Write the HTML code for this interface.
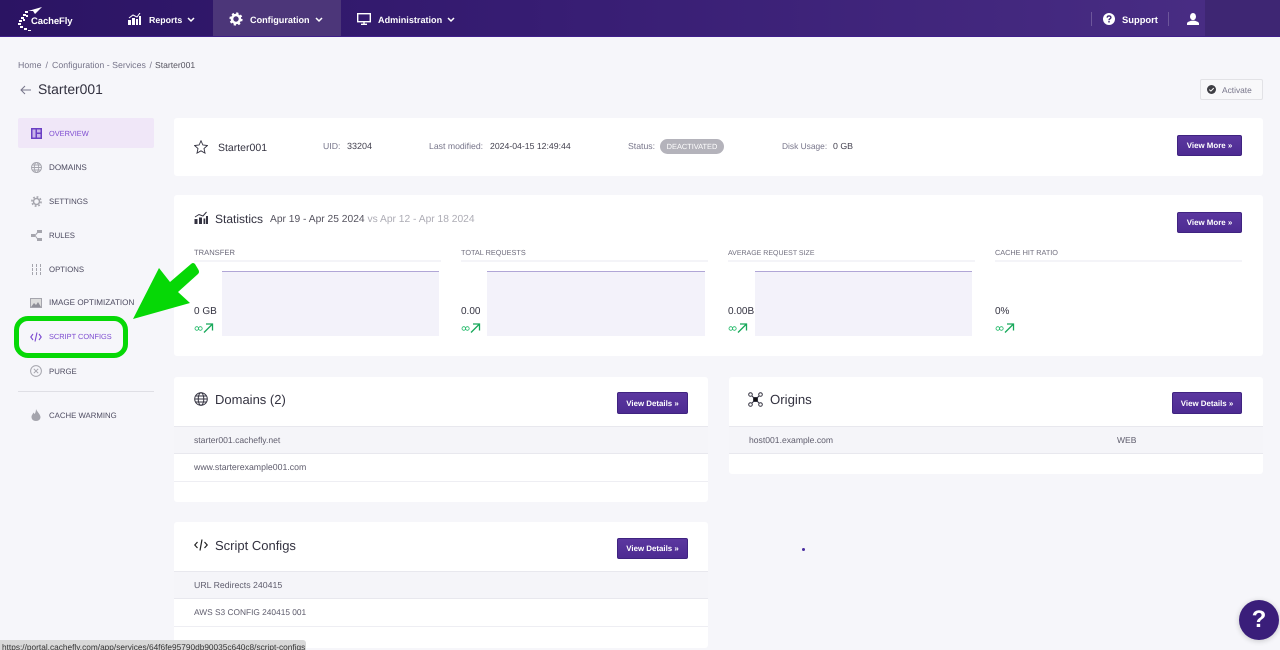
<!DOCTYPE html>
<html><head><meta charset="utf-8"><title>Starter001</title>
<style>
html,body{margin:0;padding:0;width:1280px;height:650px;overflow:hidden;background:#f6f6fa;font-family:"Liberation Sans",sans-serif;color:#4a4858;text-rendering:geometricPrecision}
.a{position:absolute}
.t{position:absolute;white-space:nowrap;line-height:14px}
.card{position:absolute;background:#fff;border-radius:3px}
.nav{position:absolute;left:0;top:0;width:1280px;height:36px;background:linear-gradient(90deg,#2b1463 0%,#361c72 40%,#4a2e85 100%);border-bottom:1px solid #3f1f8a}
.nt{position:absolute;top:13px;color:#fff;font-size:9.1px;font-weight:bold;line-height:14px;white-space:nowrap}
.side{position:absolute;left:49px;font-size:7.8px;line-height:12px;color:#4d4b60;white-space:nowrap}
.btn{position:absolute;height:22px;background:linear-gradient(#5b379f,#4d2b92);border:1px solid #3f2380;box-sizing:border-box;border-radius:2px;color:#fff;font-size:7.9px;font-weight:bold;line-height:21px;text-align:center;white-space:nowrap}
.h{position:absolute;font-size:13px;color:#333240;line-height:16px;white-space:nowrap}
.lab{position:absolute;top:247px;font-size:7.3px;color:#6d6b7b;line-height:12px;white-space:nowrap}
.ln{position:absolute;top:260px;height:1.5px;background:#f4f4f8}
.ch{position:absolute;top:271px;height:65px;background:#f3f2fa;border-top:1px solid #b0a6d6;box-sizing:border-box}
.val{position:absolute;top:305px;font-size:10px;color:#333240;line-height:14px}
.row{position:absolute;font-size:8.6px;color:#5f5d6d;line-height:26px;box-sizing:border-box;padding-left:20px;white-space:nowrap}
.g{background:#f5f5f9;border-top:1px solid #e8e8ee;border-bottom:1px solid #e8e8ee}
.b{border-bottom:1.5px solid #eeeef3}
</style></head><body>

<div class="nav"></div>
<div class="a" style="left:213px;top:0;width:128px;height:36px;background:#4c3679"></div>
<div class="a" style="left:1205px;top:0;width:75px;height:36px;background:#3e2673"></div>
<div class="a" style="left:1091px;top:12px;width:1px;height:14px;background:#6d569b"></div>
<div class="a" style="left:1168px;top:12px;width:1px;height:14px;background:#6d569b"></div>

<svg class="a" style="left:17px;top:5px" width="30" height="28" viewBox="0 0 30 28" fill="#fff"><path d="M11 6L25 2 18 9 16 6z"/><path d="M8 6h3v2H8zM6 9h3v2H6zM4 12h3v2H4zM2 15h3v2H2zM1 18h3v2H1zM3 21h3v2H3zM7 23h3v2H7zM11 25h3v1h-3zM9 10h2v2H9zM6 14h2v2H6z"/></svg>
<div class="t" style="left:31px;top:15px;color:#fff;font-size:9.5px;font-weight:bold;letter-spacing:-.1px">CacheFly</div>

<svg class="a" style="left:128px;top:13px" width="13" height="12" viewBox="0 0 13 12" fill="#fff"><path d="M0 7h3v5H0zM4 5h3v7H4zM8 6h2v6H8zM11 3h2v9h-2z"/><path d="M1 5L5 2 9 4 12 0" stroke="#fff" fill="none"/></svg>
<div class="nt" style="left:149px;font-size:8.8px">Reports</div>
<svg class="a" style="left:187px;top:17px" width="8" height="6" fill="none" stroke="#fff" stroke-width="1.5"><path d="M1 1l3 3 3-3"/></svg>
<svg class="a" style="left:229px;top:12px" width="14" height="14" viewBox="0 0 14 14"><circle cx="7" cy="7" r="4" fill="none" stroke="#fff" stroke-width="2.6"/><circle cx="7" cy="7" r="5.6" fill="none" stroke="#fff" stroke-width="2" stroke-dasharray="2.2 2.2"/></svg>
<div class="nt" style="left:250px">Configuration</div>
<svg class="a" style="left:315px;top:17px" width="8" height="6" fill="none" stroke="#fff" stroke-width="1.5"><path d="M1 1l3 3 3-3"/></svg>
<svg class="a" style="left:357px;top:13px" width="14" height="12" viewBox="0 0 14 12" fill="none" stroke="#fff"><rect x=".7" y=".7" width="12.6" height="8" stroke-width="1.4"/><path d="M4 11.3h6M7 9v2" stroke-width="1.4"/></svg>
<div class="nt" style="left:378px">Administration</div>
<svg class="a" style="left:447px;top:17px" width="8" height="6" fill="none" stroke="#fff" stroke-width="1.5"><path d="M1 1l3 3 3-3"/></svg>

<svg class="a" style="left:1103px;top:13px" width="12" height="12" viewBox="0 0 12 12"><circle cx="6" cy="6" r="6" fill="#fff"/><path d="M4.2 4.6C4.2 2.4 7.9 2.4 7.9 4.5 7.9 5.8 6 5.9 6 7.2" fill="none" stroke="#3d2575" stroke-width="1.4"/><rect x="5.3" y="8" width="1.4" height="1.5" fill="#3d2575"/></svg>
<div class="nt" style="left:1122px;font-size:9.4px">Support</div>
<svg class="a" style="left:1187px;top:13px" width="12" height="13" viewBox="0 0 12 13" fill="#fff"><ellipse cx="6" cy="3.6" rx="3" ry="3.6"/><path d="M0 12V10.500C0 9 2.500 8.500 4 7.800H8C9.500 8.500 12 9 12 10.500V12z"/></svg>

<div class="t" style="left:18px;top:58px;font-size:8.8px;color:#77758a">Home</div>
<div class="t" style="left:45.500px;top:58px;font-size:8.800px;color:#77758a">/</div>
<div class="t" style="left:52px;top:58px;font-size:8.800px;color:#77758a">Configuration - Services</div>
<div class="t" style="left:149.500px;top:58px;font-size:8.800px;color:#77758a">/</div>
<div class="t" style="left:155px;top:58px;font-size:8.600px;color:#55535f">Starter001</div>
<svg class="a" style="left:20px;top:85px" width="12" height="10" fill="none" stroke="#77758a"><path d="M11 5H1M5 1L1 5l4 4"/></svg>
<div class="t" style="left:38px;top:81px;font-size:13.900px;line-height:17px;color:#333240">Starter001</div>

<div class="a" style="left:1200px;top:79px;width:63px;height:21px;box-sizing:border-box;background:#f8f8fa;border:1px solid #e2e2e6;border-radius:2px"></div>
<svg class="a" style="left:1207px;top:85px" width="9" height="9" viewBox="0 0 9 9"><circle cx="4.500" cy="4.500" r="4.500" fill="#3f3f45"/><path d="M2.300 4.600l1.600 1.500 2.800-3" fill="none" stroke="#fff"/></svg>
<div class="t" style="left:1222px;top:83px;font-size:8.400px;color:#77758a">Activate</div>

<!-- sidebar -->
<div class="a" style="left:18px;top:118px;width:136px;height:30px;background:#f0e7f8;border-radius:2px"></div>
<svg class="a" style="left:31px;top:128px" width="11" height="11" viewBox="0 0 11 11"><rect width="11" height="11" fill="#6b3fc4"/><path d="M1.500 1.500h3v8h-3zM6 1.500h3.500v3H6zM6 6h3.500v3.500H6z" fill="#c9b4ea"/></svg>
<div class="side" style="top:128px;color:#7c4ad0;font-size:7.400px">OVERVIEW</div>
<svg class="a" style="left:31px;top:162px" width="11" height="11" viewBox="0 0 11 11" fill="none" stroke="#a5a5ad" stroke-width=".9"><circle cx="5.500" cy="5.500" r="5"/><ellipse cx="5.500" cy="5.500" rx="2.200" ry="5"/><path d="M.5 5.500h10M1.200 3h8.600M1.200 8h8.600"/></svg>
<div class="side" style="top:162px;font-size:8.100px">DOMAINS</div>
<svg class="a" style="left:31px;top:196px" width="11" height="11" viewBox="0 0 11 11" fill="none" stroke="#a5a5ad"><circle cx="5.500" cy="5.500" r="3" stroke-width="1.500"/><circle cx="5.500" cy="5.500" r="4.600" stroke-width="1.600" stroke-dasharray="1.800 1.800"/></svg>
<div class="side" style="top:196px">SETTINGS</div>
<svg class="a" style="left:31px;top:230px" width="11" height="11" viewBox="0 0 11 11" fill="#a5a5ad"><path d="M0 4h4v3H0zM6 0h5v3H6zM6 8h5v3H6z"/><path d="M4 5.500L7 2M4 5.500L7 9.500" stroke="#a5a5ad" fill="none"/></svg>
<div class="side" style="top:230px">RULES</div>
<svg class="a" style="left:31px;top:264px" width="11" height="11" viewBox="0 0 11 11" stroke="#a5a5ad" stroke-width="1"><path d="M1.500 0v11M5.500 0v11M9.500 0v11" stroke-dasharray="3 1"/></svg>
<div class="side" style="top:264px">OPTIONS</div>
<svg class="a" style="left:30px;top:298px" width="12" height="10" viewBox="0 0 12 10"><rect width="12" height="10" fill="#a5a5ad"/><rect x="1" y="1" width="10" height="8" fill="#ddd"/><path d="M1 9l3-4 2 2 2-3 3 5z" fill="#8f8f98"/></svg>
<div class="side" style="top:297px;font-size:8.100px">IMAGE OPTIMIZATION</div>
<svg class="a" style="left:30px;top:332px" width="12" height="10" viewBox="0 0 12 10" fill="none" stroke="#7c4ad0" stroke-width="1.100"><path d="M3 2L.8 5 3 8M9 2l2.200 3L9 8M7 .5L5 9.500"/></svg>
<div class="side" style="top:331px;color:#7c4ad0;font-size:7.400px">SCRIPT CONFIGS</div>
<svg class="a" style="left:30px;top:365px" width="12" height="12" viewBox="0 0 12 12" fill="none" stroke="#a5a5ad"><circle cx="6" cy="6" r="5.400"/><path d="M3.800 3.800l4.400 4.400M8.200 3.800l-4.400 4.400"/></svg>
<div class="side" style="top:366px">PURGE</div>
<div class="a" style="left:18px;top:391px;width:136px;height:1px;background:#dfdfe5"></div>
<svg class="a" style="left:31px;top:409px" width="10" height="12" viewBox="0 0 10 12" fill="#a5a5ad"><path d="M5 0C6 3 9 4.500 9.500 8 9.500 10.500 7.500 12 5 12 2.500 12 .5 10.500.5 8 .5 6 2 5 2.500 3.500L3.500 5C4.500 4 5 2 5 0z"/></svg>
<div class="side" style="top:410px">CACHE WARMING</div>

<!-- top card -->
<div class="card" style="left:174px;top:118px;width:1089px;height:58px"></div>
<svg class="a" style="left:194px;top:140px" width="14" height="14" viewBox="0 0 14 14" fill="none" stroke="#333240" stroke-width=".9"><path d="M7 .8l1.900 4.200 4.500.5-3.400 3 1 4.600L7 10.800 3 13.100l1-4.600-3.400-3 4.500-.5z"/></svg>
<div class="t" style="left:218px;top:141px;font-size:10.500px;color:#333240">Starter001</div>
<div class="t" style="left:323px;top:139px;font-size:8.700px;color:#77758a">UID:</div>
<div class="t" style="left:347px;top:139px;font-size:9px;color:#444250">33204</div>
<div class="t" style="left:429px;top:139px;font-size:8.700px;color:#77758a">Last modified:</div>
<div class="t" style="left:490px;top:139px;font-size:8.700px;color:#444250">2024-04-15 12:49:44</div>
<div class="t" style="left:628px;top:139px;font-size:8.700px;color:#77758a">Status:</div>
<div class="a" style="left:660px;top:139px;width:64px;height:15px;background:#b4b3bb;border-radius:8px;color:#fff;font-size:7.400px;line-height:15px;text-align:center">DEACTIVATED</div>
<div class="t" style="left:782px;top:139px;font-size:8.400px;color:#77758a">Disk Usage:</div>
<div class="t" style="left:833px;top:139px;font-size:8.800px;color:#444250">0 GB</div>
<div class="btn" style="left:1177px;top:135px;width:65px;height:21px;line-height:20px">View More »</div>

<!-- stats card -->
<div class="card" style="left:174px;top:195px;width:1089px;height:161px"></div>
<svg class="a" style="left:194px;top:211px" width="14" height="13" viewBox="0 0 14 13" fill="#333240"><path d="M.5 8h3v5h-3zM5 6.500h3V13H5zM9.500 7.500h1.800V13H9.500zM12 5h2v8h-2z"/><path d="M1 6L5 3.500 9 5 12.500 1" stroke="#333240" fill="none"/></svg>
<div class="h" style="left:215px;top:211px;font-size:12px">Statistics</div>
<div class="t" style="left:270px;top:213px;font-size:10.250px;color:#55535f">Apr 19 - Apr 25 2024 <span style="color:#adacb5">vs Apr 12 - Apr 18 2024</span></div>
<div class="btn" style="left:1177px;top:212px;width:65px;height:21px;line-height:20px">View More »</div>

<div class="lab" style="left:194px;font-size:7.600px">TRANSFER</div>
<div class="lab" style="left:461px">TOTAL REQUESTS</div>
<div class="lab" style="left:728px;top:248px;font-size:7px">AVERAGE REQUEST SIZE</div>
<div class="lab" style="left:995px">CACHE HIT RATIO</div>
<div class="ln" style="left:194px;width:247px"></div>
<div class="ln" style="left:461px;width:247px"></div>
<div class="ln" style="left:728px;width:247px"></div>
<div class="ln" style="left:995px;width:247px"></div>
<div class="ch" style="left:222px;width:217px"></div>
<div class="ch" style="left:487px;width:218px"></div>
<div class="ch" style="left:755px;width:217px"></div>
<div class="val" style="left:194px">0 GB</div>
<div class="val" style="left:461px">0.00</div>
<div class="val" style="left:728px">0.00B</div>
<div class="val" style="left:995px">0%</div>
<svg class="a" style="left:194px;top:322px" width="20" height="12" fill="none" stroke="#1fb866"><circle cx="2.800" cy="6.500" r="1.800" stroke-width=".8"/><circle cx="6.400" cy="6.500" r="1.800" stroke-width=".8"/><path d="M10 10.500L18 2.500M12 2h6.500v6.500" stroke="#17a85a" stroke-width="1.300"/></svg>
<svg class="a" style="left:461px;top:322px" width="20" height="12" fill="none" stroke="#1fb866"><circle cx="2.800" cy="6.500" r="1.800" stroke-width=".8"/><circle cx="6.400" cy="6.500" r="1.800" stroke-width=".8"/><path d="M10 10.500L18 2.500M12 2h6.500v6.500" stroke="#17a85a" stroke-width="1.300"/></svg>
<svg class="a" style="left:728px;top:322px" width="20" height="12" fill="none" stroke="#1fb866"><circle cx="2.800" cy="6.500" r="1.800" stroke-width=".8"/><circle cx="6.400" cy="6.500" r="1.800" stroke-width=".8"/><path d="M10 10.500L18 2.500M12 2h6.500v6.500" stroke="#17a85a" stroke-width="1.300"/></svg>
<svg class="a" style="left:995px;top:322px" width="20" height="12" fill="none" stroke="#1fb866"><circle cx="2.800" cy="6.500" r="1.800" stroke-width=".8"/><circle cx="6.400" cy="6.500" r="1.800" stroke-width=".8"/><path d="M10 10.500L18 2.500M12 2h6.500v6.500" stroke="#17a85a" stroke-width="1.300"/></svg>

<!-- domains -->
<div class="card" style="left:174px;top:377px;width:534px;height:125px"></div>
<svg class="a" style="left:194px;top:392px" width="14" height="14" viewBox="0 0 14 14" fill="none" stroke="#333240"><circle cx="7" cy="7" r="6.300"/><ellipse cx="7" cy="7" rx="2.800" ry="6.300"/><path d="M.7 7h12.600M1.600 4h10.800M1.600 10h10.800" stroke-width=".9"/></svg>
<div class="h" style="left:215px;top:392px">Domains (2)</div>
<div class="btn" style="left:617px;top:392px;width:71px">View Details »</div>
<div class="row g" style="left:174px;top:426px;width:534px;height:28px">starter001.cachefly.net</div>
<div class="row b" style="left:174px;top:454px;width:534px;height:28px;font-size:8.750px">www.starterexample001.com</div>

<!-- origins -->
<div class="card" style="left:729px;top:377px;width:534px;height:97px"></div>
<svg class="a" style="left:748px;top:392px" width="15" height="15" viewBox="0 0 15 15" fill="none" stroke="#333240"><rect x="5.500" y="5.500" width="4" height="4" fill="#111"/><circle cx="2.500" cy="2.500" r="1.800"/><circle cx="12.500" cy="2.500" r="1.800"/><circle cx="2.500" cy="12.500" r="1.800"/><circle cx="12.500" cy="12.500" r="1.800"/><path d="M4 4l2 2M11 4L9 6M4 11l2-2M11 11L9 9"/></svg>
<div class="h" style="left:770px;top:392px;font-size:13.200px">Origins</div>
<div class="btn" style="left:1172px;top:392px;width:70px">View Details »</div>
<div class="row g" style="left:729px;top:426px;width:534px;height:28px">host001.example.com</div>
<div class="t" style="left:1117px;top:433px;font-size:8.500px;color:#5f5d6d">WEB</div>

<!-- script configs -->
<div class="card" style="left:174px;top:522px;width:534px;height:126px"></div>
<svg class="a" style="left:194px;top:539px" width="14" height="12" viewBox="0 0 14 12" fill="none" stroke="#222" stroke-width="1.200"><path d="M3.500 3L.8 6l2.700 3M10.500 3l2.700 3-2.700 3M8 .5L6 11.500"/></svg>
<div class="h" style="left:215px;top:538px">Script Configs</div>
<div class="btn" style="left:617px;top:538px;width:71px;height:21px;line-height:20px">View Details »</div>
<div class="row g" style="left:174px;top:571px;width:534px;height:28px;font-size:8.750px">URL Redirects 240415</div>
<div class="row b" style="left:174px;top:599px;width:534px;height:28px;font-size:8.340px">AWS S3 CONFIG 240415 001</div>

<div class="a" style="left:802px;top:548px;width:3px;height:3px;border-radius:50%;background:#4a2ea0"></div>

<!-- status tooltip -->
<div class="a" style="left:0;top:640px;width:306px;height:10px;background:#d9d9d9;border-radius:0 3px 0 0;overflow:hidden;font-size:8.300px;line-height:14px;color:#333;padding-left:2px;box-sizing:border-box;white-space:nowrap">https://portal.cachefly.com/app/services/64f6fe95790db90035c640c8/script-configs</div>

<!-- help -->
<div class="a" style="left:1239px;top:600px;width:40px;height:40px;border-radius:50%;background:#3a1e7a;box-shadow:0 1px 6px rgba(0,0,0,.2);color:#fff;font-size:24px;font-weight:bold;line-height:40px;text-align:center">?</div>

<!-- green annotation -->
<div class="a" style="left:14px;top:316px;width:114px;height:42px;box-sizing:border-box;border:5px solid #06d806;border-radius:14px"></div>
<svg class="a" style="left:130px;top:260px" width="75" height="62" viewBox="0 0 75 62"><path d="M3 59L29 8 40 22 61 4Q63 2 65 4L68 9Q70 12 68 14L48 32 60 43Z" fill="#06d806"/></svg>

</body></html>
